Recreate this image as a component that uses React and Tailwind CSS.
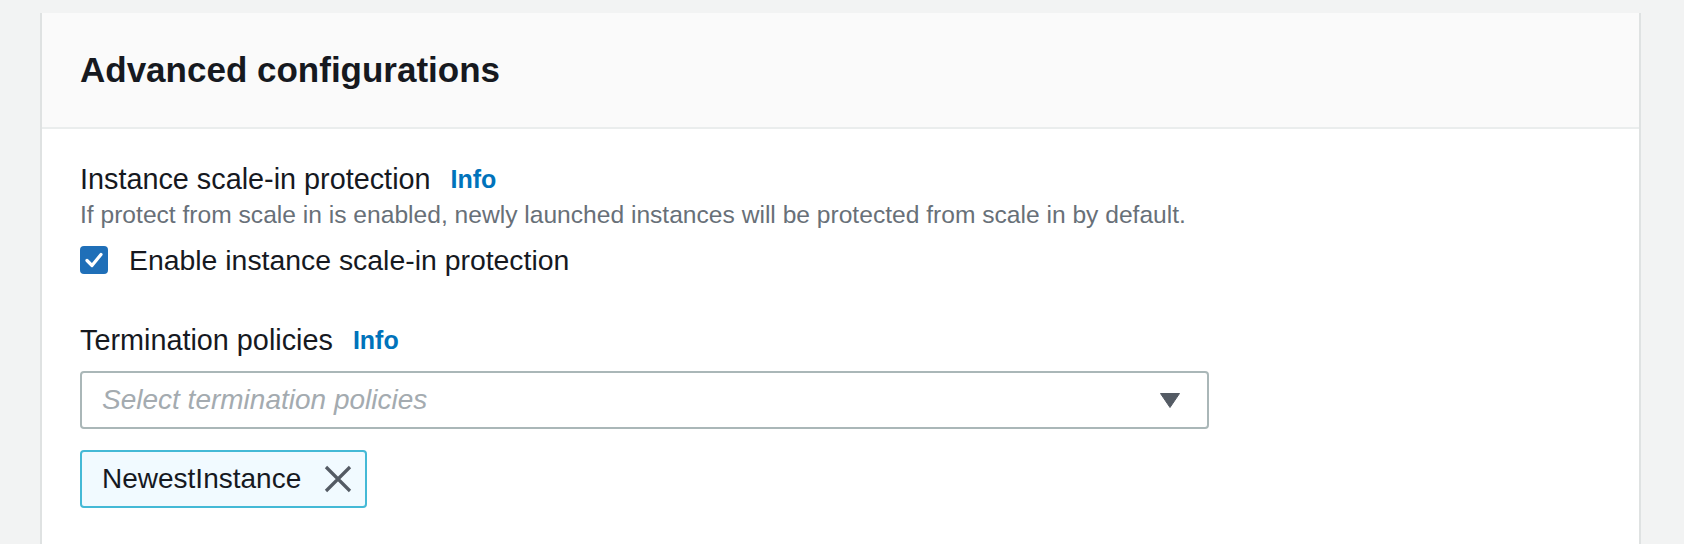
import React from "react";

const font = { fontFamily: '"Liberation Sans", Arial, sans-serif' };

const CheckIcon = () => (
  <svg viewBox="0 0 28 28" className="w-[28px] h-[28px]">
    <rect x="0" y="0" width="28" height="28" rx="4" fill="#1f6fb8" />
    <path d="M7 14.5 L12 19.5 L21 8.5" fill="none" stroke="#fff" strokeWidth="3.2" strokeLinecap="round" strokeLinejoin="round" />
  </svg>
);

const Caret = () => (
  <svg viewBox="0 0 20 15" className="w-[20px] h-[15px]">
    <path d="M0.5 0.5 H19.5 L10 14.5 Z" fill="#545b64" strokeLinejoin="round" stroke="#545b64" strokeWidth="1" />
  </svg>
);

const CloseX = () => (
  <svg viewBox="0 0 28 28" className="w-[28px] h-[28px]">
    <path d="M2 2 L26 26 M26 2 L2 26" fill="none" stroke="#545b64" strokeWidth="3.2" />
  </svg>
);

const FieldLabel = ({ children }) => (
  <div className="flex items-center h-[40px]">
    <span className="text-[28.8px] text-[#16191f]">{children}</span>
    <a className="ml-[20px] text-[25px] font-bold text-[#0073bb]">Info</a>
  </div>
);

export default function App() {
  return (
    <div className="min-h-[544px] h-[544px] overflow-hidden bg-[#f2f3f3] pt-[13px] pl-[40px] pr-[43px]" style={font}>
      <div className="bg-white h-[600px] border-l-2 border-r-2 border-[#dfe2e2]">
        {/* Header */}
        <div className="h-[116px] bg-[#fafafa] border-b-2 border-[#eaeded] flex items-center pl-[38px]">
          <h2 className="text-[35px] font-bold text-[#16191f]">Advanced configurations</h2>
        </div>

        {/* Body */}
        <div className="pl-[38px] pt-[31px]">
          <FieldLabel>Instance scale-in protection</FieldLabel>
          <div className="text-[24.6px] leading-[30px] text-[#687078]">
            If protect from scale in is enabled, newly launched instances will be protected from scale in by default.
          </div>
          <label className="flex items-center h-[40px] mt-[10px]">
            <CheckIcon />
            <span className="ml-[21px] text-[28.4px] text-[#16191f]">Enable instance scale-in protection</span>
          </label>

          <div className="mt-[41px]">
            <FieldLabel>Termination policies</FieldLabel>
          </div>
          <div className="mt-[10px] w-[1129px] h-[58px] border-2 border-[#aab7b8] rounded-[4px] bg-white flex items-center justify-between pl-[20px] pr-[27px]">
            <span className="italic text-[28px] text-[#a4abb0]">Select termination policies</span>
            <Caret />
          </div>

          <div className="mt-[21px] inline-flex items-center h-[58px] w-[287px] border-2 border-[#44b9d6] rounded-[4px] bg-[#f1faff] pl-[20px] pr-[13px]">
            <span className="text-[28px] text-[#16191f]">NewestInstance</span>
            <span className="ml-auto"><CloseX /></span>
          </div>
        </div>
      </div>
    </div>
  );
}
